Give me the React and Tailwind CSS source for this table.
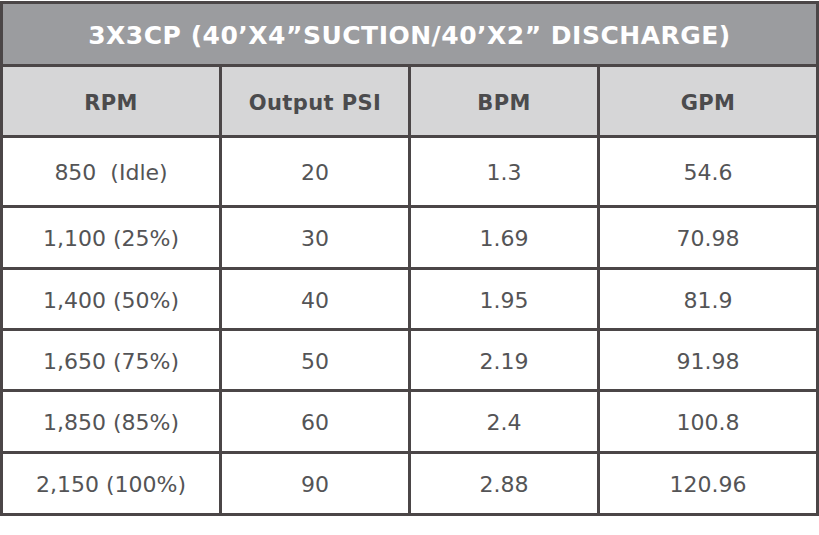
const headers = ['RPM', 'Output PSI', 'BPM', 'GPM'];

const rows = [
  { h: 'h-[67px]', cells: ['850  (Idle)', '20', '1.3', '54.6'] },
  { h: 'h-[59px]', cells: ['1,100 (25%)', '30', '1.69', '70.98'] },
  { h: 'h-[58px]', cells: ['1,400 (50%)', '40', '1.95', '81.9'] },
  { h: 'h-[58px]', cells: ['1,650 (75%)', '50', '2.19', '91.98'] },
  { h: 'h-[59px]', cells: ['1,850 (85%)', '60', '2.4', '100.8'] },
  { h: 'h-[59px]', cells: ['2,150 (100%)', '90', '2.88', '120.96'] },
];

export default function App() {
  return (
    <div className="w-[819px] h-[535px] bg-white pt-[1px] font-['DejaVu_Sans',sans-serif]">
      <div className="grid grid-cols-[216px_186px_186px_216px] gap-[3px] p-[3px] bg-[#4b4647]">
        {/* Title */}
        <div className="col-span-4 h-[60px] bg-[#9b9c9f] flex items-center justify-center pt-[4px]">
          <span className="text-white font-bold text-[25px] tracking-[0.5px]">
            3X3CP (40’X4”SUCTION/40’X2” DISCHARGE)
          </span>
        </div>

        {/* Column headers */}
        {headers.map((h) => (
          <div key={h} className="h-[68px] bg-[#d6d6d7] flex items-center justify-center pt-[5px]">
            <span className="text-[#4b4b4d] font-bold text-[21px] tracking-[0.4px]">{h}</span>
          </div>
        ))}

        {/* Data */}
        {rows.map((row, i) =>
          row.cells.map((c, j) => (
            <div key={`${i}-${j}`} className={`${row.h} bg-white flex items-center justify-center pt-[2px]`}>
              <span className="text-[#545456] text-[22px] whitespace-pre">{c}</span>
            </div>
          ))
        )}
      </div>
    </div>
  );
}
